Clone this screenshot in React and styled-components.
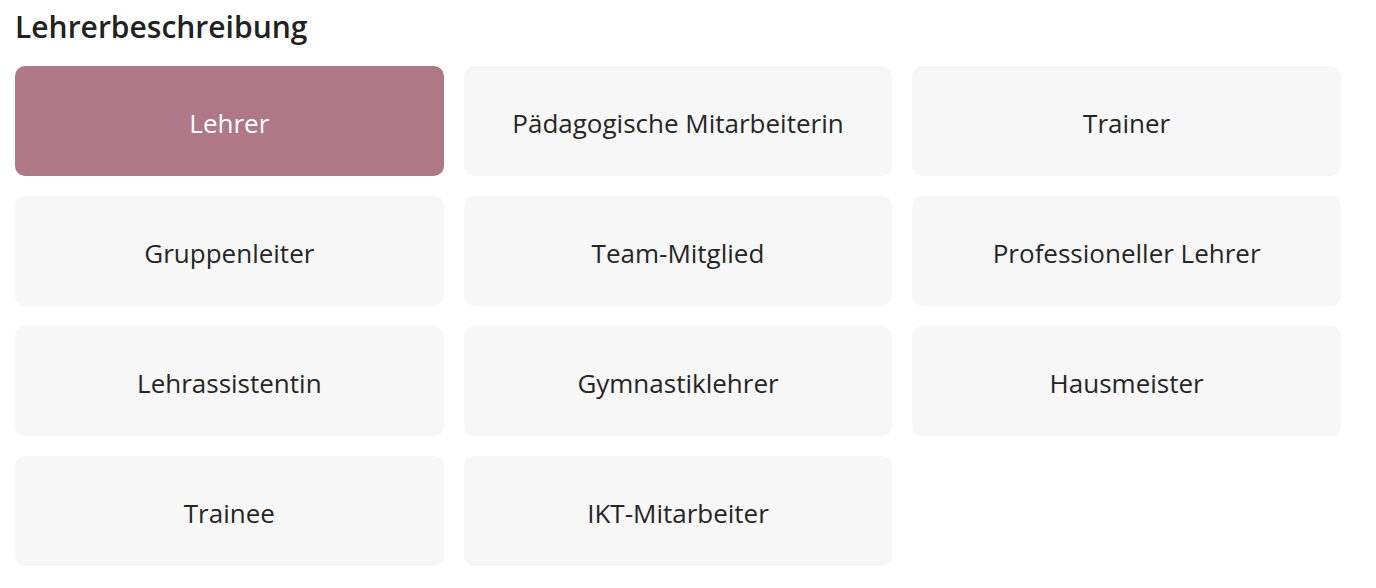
import React, { useState } from 'react'
import styled, { createGlobalStyle } from 'styled-components'

const GlobalStyle = createGlobalStyle`
	body {
		margin: 0;
		background: #ffffff;
		font-family: 'Open Sans', 'Noto Sans', sans-serif;
		color: #222222;
	}
`

const PageStyled = styled.div`
	padding: 7px 35px 0 15px;
`

const TitleStyled = styled.h2`
	margin: 0 0 19px;
	font-size: 30px;
	font-weight: 600;
	line-height: 40px;
	color: #222222;
`

const GridStyled = styled.div`
	display: grid;
	grid-template-columns: repeat(3, 1fr);
	gap: 20px;
`

const OptionStyled = styled.button`
	height: 110px;
	border: 0;
	border-radius: 10px;
	background: ${props => (props.active ? '#ae7887' : '#f7f7f7')};
	color: ${props => (props.active ? '#ffffff' : '#262626')};
	font-family: inherit;
	font-size: 26px;
	font-weight: 400;
	cursor: pointer;
	display: flex;
	align-items: center;
	justify-content: center;
	padding: 4px 0 0;
`

const options = [
	'Lehrer',
	'Pädagogische Mitarbeiterin',
	'Trainer',
	'Gruppenleiter',
	'Team-Mitglied',
	'Professioneller Lehrer',
	'Lehrassistentin',
	'Gymnastiklehrer',
	'Hausmeister',
	'Trainee',
	'IKT-Mitarbeiter',
]

export default function App() {
	const [selected, setSelected] = useState('Lehrer')
	return (
		<PageStyled>
			<GlobalStyle />
			<TitleStyled>Lehrerbeschreibung</TitleStyled>
			<GridStyled>
				{options.map(option => (
					<OptionStyled
						key={option}
						active={selected === option ? 1 : 0}
						onClick={() => setSelected(option)}
					>
						{option}
					</OptionStyled>
				))}
			</GridStyled>
		</PageStyled>
	)
}
